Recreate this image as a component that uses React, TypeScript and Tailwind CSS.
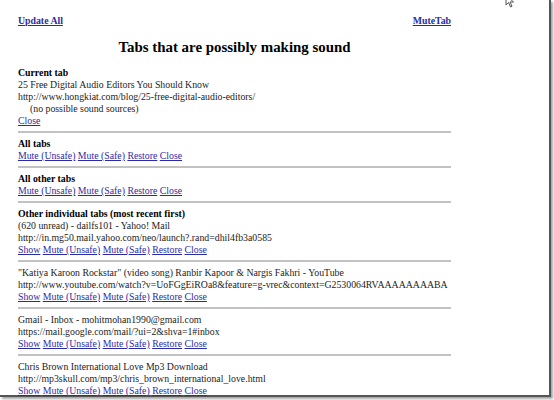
import React from "react";

const L = ({ children }: { children: React.ReactNode }) => (
  <a href="#" className="text-[#2b2ba8] underline">
    {children}
  </a>
);

const Hr = () => <div className="h-[2px] bg-[#c2c2c2] mt-[4px] mb-[5px]" />;

const Actions = ({ show }: { show?: boolean }) => (
  <div>
    {show && (
      <>
        <L>Show</L>{" "}
      </>
    )}
    <L>Mute (Unsafe)</L> <L>Mute (Safe)</L> <L>Restore</L> <L>Close</L>
  </div>
);

const tabs = [
  {
    title: "(620 unread) - dailfs101 - Yahoo! Mail",
    url: "http://in.mg50.mail.yahoo.com/neo/launch?.rand=dhil4fb3a0585",
  },
  {
    title: '"Katiya Karoon Rockstar" (video song) Ranbir Kapoor & Nargis Fakhri - YouTube',
    url: "http://www.youtube.com/watch?v=UoFGgEiROa8&feature=g-vrec&context=G2530064RVAAAAAAAABA",
  },
  {
    title: "Gmail - Inbox - mohitmohan1990@gmail.com",
    url: "https://mail.google.com/mail/?ui=2&shva=1#inbox",
  },
  {
    title: "Chris Brown International Love Mp3 Download",
    url: "http://mp3skull.com/mp3/chris_brown_international_love.html",
  },
];

export default function App() {
  return (
    <div className="w-[554px] h-[400px] bg-white relative overflow-hidden text-[#222] font-['Liberation_Serif','Times_New_Roman',serif]">
      <div className="w-[551px] h-[397px] border-r-[2px] border-b-[2px] border-[#555] shadow-[2px_2px_2px_rgba(0,0,0,0.35)] bg-white">
        <div className="w-[451px] pl-[18px] pt-[15px] text-[9.8px] leading-[12px]">
          <div className="flex justify-between font-bold">
            <L>Update All</L>
            <L>MuteTab</L>
          </div>
          <div className="text-[14.9px] leading-[18px] font-bold text-black text-center mt-[11px] mb-[11px]">
            Tabs that are possibly making sound
          </div>
          <div className="font-bold text-black">Current tab</div>
          <div>25 Free Digital Audio Editors You Should Know</div>
          <div>http://www.hongkiat.com/blog/25-free-digital-audio-editors/</div>
          <div className="pl-[12px]">(no possible sound sources)</div>
          <div>
            <L>Close</L>
          </div>
          <Hr />
          <div className="font-bold text-black">All tabs</div>
          <Actions />
          <Hr />
          <div className="font-bold text-black">All other tabs</div>
          <Actions />
          <Hr />
          <div className="font-bold text-black">Other individual tabs (most recent first)</div>
          {tabs.map((t, i) => (
            <div key={i}>
              {i > 0 && <Hr />}
              <div className="whitespace-nowrap">{t.title}</div>
              <div className="whitespace-nowrap">{t.url}</div>
              <Actions show />
            </div>
          ))}
        </div>
      </div>
      <svg className="absolute left-[505px] top-[-6px]" width="12" height="14" viewBox="0 0 12 14">
        <path d="M1 1 L1 11 L3.5 8.5 L5.5 13 L7 12.3 L5 8 L8.5 8 Z" fill="white" stroke="#555" strokeWidth="1" />
      </svg>
    </div>
  );
}
